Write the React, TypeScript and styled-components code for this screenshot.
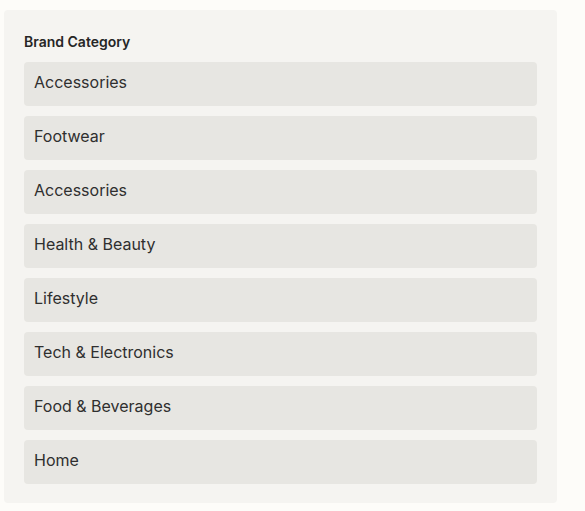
import styled, { createGlobalStyle } from 'styled-components';

const GlobalStyle = createGlobalStyle`
  html, body {
    margin: 0;
    padding: 0;
    background-color: #fdfcf9;
    font-family: Inter, 'Noto Sans', sans-serif;
  }
`;

const StyledPage = styled.div`
  padding: 10px 28px 8px 4px;
`;

const StyledPanel = styled.section`
  background-color: #f5f4f1;
  border-radius: 4px;
  box-sizing: border-box;
  padding: 20px 20px 19px;
  width: 553px;
`;

const StyledTitle = styled.h3`
  color: #262626;
  font-size: 14px;
  font-weight: 600;
  line-height: 24px;
  margin: 0 0 8px;
`;

const StyledList = styled.ul`
  display: flex;
  flex-direction: column;
  gap: 10px;
  list-style: none;
  margin: 0;
  padding: 0;
`;

const StyledItem = styled.li`
  align-items: center;
  background-color: #e7e6e2;
  border-radius: 4px;
  box-sizing: border-box;
  color: #2f2f2f;
  display: flex;
  font-size: 16px;
  height: 44px;
  padding: 0 10px 4px;
`;

const categories = [
  'Accessories',
  'Footwear',
  'Accessories',
  'Health & Beauty',
  'Lifestyle',
  'Tech & Electronics',
  'Food & Beverages',
  'Home',
];

const App = () => (
  <>
    <GlobalStyle />
    <StyledPage>
      <StyledPanel>
        <StyledTitle>Brand Category</StyledTitle>
        <StyledList>
          {categories.map((category, index) => (
            <StyledItem key={index}>{category}</StyledItem>
          ))}
        </StyledList>
      </StyledPanel>
    </StyledPage>
  </>
);

export default App;
